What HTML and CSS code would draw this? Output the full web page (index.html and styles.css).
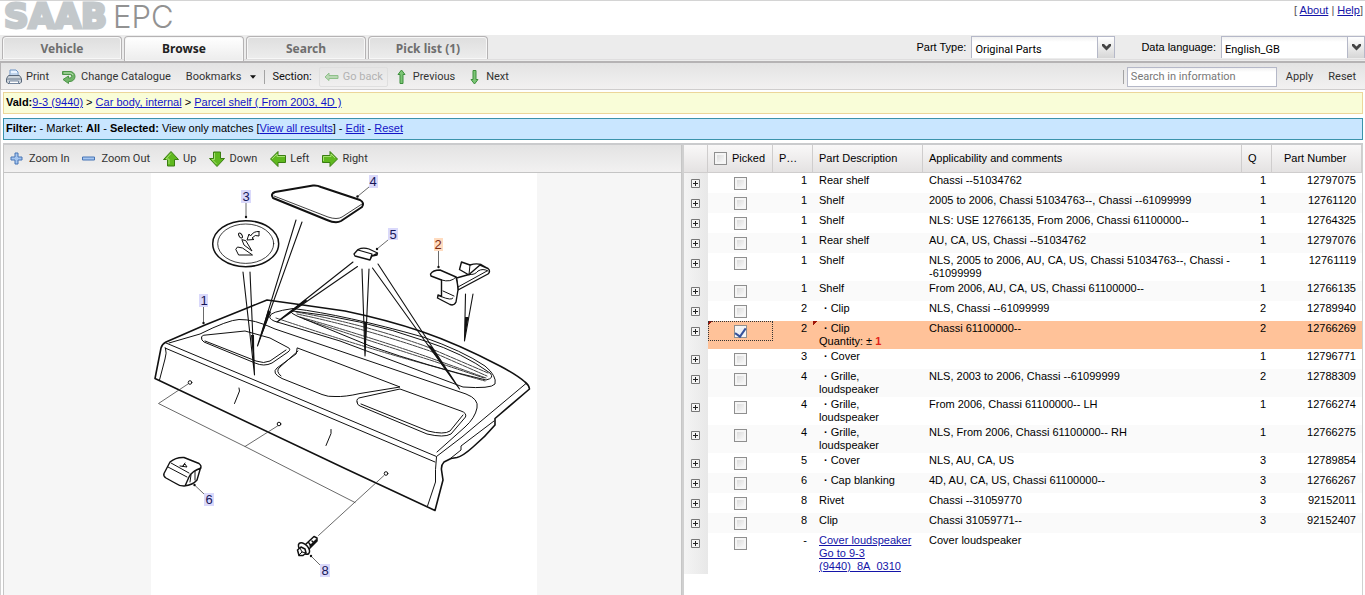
FILE: index.html
```html
<!DOCTYPE html>
<html lang="en">
<head>
<meta charset="utf-8">
<title>Saab EPC</title>
<link rel="stylesheet" href="styles.css">
</head>
<body>
<div class="page">
<header class="header">
  <div class="logo"><span class="logo-saab">SAAB</span><span class="logo-epc">EPC</span></div>
  <div class="header-links">[ <a href="#">About</a> | <a href="#">Help</a>]</div>
</header>

<div class="tabstrip">
  <nav class="tabs">
    <button class="tab">Vehicle</button>
    <button class="tab active">Browse</button>
    <button class="tab">Search</button>
    <button class="tab">Pick list (1)</button>
  </nav>
  <div class="selectors">
    <label for="ptype">Part Type:</label>
    <div class="combo"><select id="ptype"><option>Original Parts</option></select><span class="trigger"><svg width="9" height="7" viewBox="0 0 9 7"><path d="M0 0h2l2.500 2.500L7 0h2v2L4.500 6.500 0 2z" fill="#444"/></svg></span></div>
    <label class="lang" for="dlang">Data language:</label>
    <div class="combo"><select id="dlang"><option>English_GB</option></select><span class="trigger"><svg width="9" height="7" viewBox="0 0 9 7"><path d="M0 0h2l2.500 2.500L7 0h2v2L4.500 6.500 0 2z" fill="#444"/></svg></span></div>
  </div>
</div>

<div class="toolbar main-toolbar">
  <button class="tool"><svg width="16" height="16" viewBox="0 0 16 16"><path d="M4 7V1h6l2 2v4" fill="#eaf3ff" stroke="#6b93c4"/><path d="M2.500 6.500h11l2 3v3.500l-1.500 1.500H2L.5 13V9.500z" fill="#ccd3da" stroke="#596779"/><path d="M1 10h14" stroke="#69788c"/><path d="M3.500 12h9v2.500h-9z" fill="#fff" stroke="#74869e"/><path d="M5 5h6" stroke="#96b4d8"/></svg>Print</button>
  <button class="tool"><svg width="16" height="16" viewBox="0 0 16 16"><path d="M1.500 2.500H9a5 5 0 0 1 0 10H7.500v2L2 10.500 7.500 7v2H9a1.500 1.500 0 0 0 0-3.500H1.500z" fill="#72b56a" stroke="#4b9547"/><path d="M3 4h6a3.500 3.500 0 0 1 3 2" stroke="#b5deb0" fill="none"/></svg>Change Catalogue</button>
  <button class="tool bookmarks">Bookmarks<svg width="6" height="4" viewBox="0 0 7 4"><path d="M0 0h7L3.500 4z" fill="#111"/></svg></button>
  <span class="sep"></span>
  <span class="section-label">Section:</span>
  <button class="tool disabled" disabled><svg width="15" height="10" viewBox="0 0 15 10"><path d="M5 1L1 5l4 3.500V6.500h9v-3H5z" fill="#b9d8b4" stroke="#8fc08b"/></svg>Go back</button>
  <button class="tool prev"><svg width="9" height="16" viewBox="0 0 9 16"><path d="M4.500 1L8 5.500H6v9H3v-9H1z" fill="#7cc576" stroke="#3d8f3c"/></svg>Previous</button>
  <button class="tool next"><svg width="9" height="16" viewBox="0 0 9 16"><path d="M4.500 15L8 10.500H6v-9H3v9H1z" fill="#7cc576" stroke="#3d8f3c"/></svg>Next</button>
  <div class="search">
    <span class="sep"></span>
    <input type="text" aria-label="Search in information" placeholder="Search in information">
    <button class="tool">Apply</button>
    <button class="tool">Reset</button>
  </div>
</div>

<div class="body">
<div class="crumbs"><b>Vald:</b><a href="#">9-3 (9440)</a> &gt; <a href="#">Car body, internal</a> &gt; <a href="#">Parcel shelf ( From 2003, 4D )</a></div>
<div class="filter"><b>Filter:</b> - Market: <b>All</b> - <b>Selected:</b> View only matches [<a href="#">View all results</a>] - <a href="#">Edit</a> - <a href="#">Reset</a></div>

<main class="split">
<section class="viewer">
  <div class="toolbar zoom-toolbar">
    <button class="tool"><svg width="13" height="13" viewBox="0 0 13 13"><path d="M5 1h3v4h4v3H8v4H5V8H1V5h4z" fill="#a6c6f0" stroke="#4775b5"/></svg>Zoom In</button>
    <button class="tool"><svg width="13" height="13" viewBox="0 0 13 13"><path d="M.5 5h12v3H.5z" fill="#a6c6f0" stroke="#4775b5"/></svg>Zoom Out</button>
    <button class="tool arrow"><svg width="16" height="16" viewBox="0 0 16 16"><path d="M8 .5L15.500 8.500h-4v6.500h-7V8.500h-4z" fill="#5fb81f" stroke="#3a7d12"/><path d="M8 2.500L3 8h3v5" fill="none" stroke="#a5df70"/></svg>Up</button>
    <button class="tool arrow"><svg width="16" height="16" viewBox="0 0 16 16"><path d="M8 15.500L15.500 7.500h-4V1h-7v6.500h-4z" fill="#5fb81f" stroke="#3a7d12"/><path d="M5.500 2v6.500H3L7.500 13" fill="none" stroke="#a5df70"/></svg>Down</button>
    <button class="tool arrow"><svg width="16" height="16" viewBox="0 0 16 16"><path d="M.5 8L8 .5v4h7.500v7H8v4z" fill="#5fb81f" stroke="#3a7d12"/><path d="M2 8l5-5v2.500h8" fill="none" stroke="#a5df70"/></svg>Left</button>
    <button class="tool arrow"><svg width="16" height="16" viewBox="0 0 16 16"><path d="M15.500 8L8 .5v4H.5v7H8v4z" fill="#5fb81f" stroke="#3a7d12"/><path d="M1.500 10V5.500H9V3l4 4" fill="none" stroke="#a5df70"/></svg>Right</button>
  </div>
  <div class="canvas">
    <svg class="drawing" width="386" height="422" viewBox="151 173 386 422" role="img" aria-label="Parcel shelf, exploded view">
      <g fill="none" stroke="#111" stroke-width="1" stroke-linejoin="round" stroke-linecap="round">
        <!-- shelf body -->
        <path stroke-width="1.600" d="M155 378.500L161 348Q162 344 166 342L205 325L246 308.500L267 300L303 305L345 311Q388 320 423 332T500 366Q517 375 525 382Q529 385 529.500 389L495 418.500V425Q485 437 473 447Q463 456 457 457.500L451 458.500L444 462Q441 465 441.500 470L443 480L435 510.500L345 468.500Z"/>
        <path d="M166 343L345 418L436.500 456.500L462 437L526 383.500M165 348L345 424L435 462M165.500 348Q167 353 165 359L159.500 380M436.500 457Q435 470 435.500 482L427.500 506M169 343L200 334Q228 320 239 319.500Q254 319 275 329L340 351L466 394Q479 399 477 408Q475 418 465 427L437 452"/>
        <path d="M270 316Q269 312 293 308.500Q345 315 423 337Q463 351 485 366Q497 376 495 384Q491 389 463 387L340 341L274 321Q268 318 270 316"/>
        <path d="M293 311Q360 318 425 341Q463 353 490 373Q495 378 486 380Q430 367 370 346L297 316Q287 311 293 311"/>
        <path stroke-width=".8" stroke-dasharray="5 1" d="M296 312Q360 323 425 346L488 373M297 314Q360 327 430 351L487 376M300 317Q360 334 425 356L486 378M304 319Q370 341 430 360L484 378M276 318Q350 343 421 363L485 381"/>
        <path d="M201.500 338Q201 335 206 335L245 331L270 338L287 347Q292 349 288 352L272 363Q264 367 255 363L204 342Q201 340 201.500 338M205 341L256 361Q264 364 270 361L286 350"/>
        <path d="M297.500 348L340 364L400 387L360 393.500Q345 397 335 396.500Q328 397 322 394.500L282 378.500Q271 373 277 368L296 354ZM298 351L280 367Q275 371 281 376"/>
        <path d="M357 402Q356 398 361 397.500L400 389L461 411Q467 413 465.500 417L451 434Q444 438 427 434L360 406Q357 405 357 402M361 404L428 431Q444 435 450 431L463 415"/>
        <path d="M451 458L461 450V446L494 421"/>
        <path d="M239 388l.5 3-5 12.500M331 429.500v4l-5 12"/>
        <path stroke="#444" stroke-width=".8" d="M188 384L158.500 403.500L245 446.500L277.500 426M245 446.500L355 502.500M384 475.500L318.500 535.500"/>
        <circle cx="190" cy="382.500" r="1.800"/><circle cx="279" cy="424" r="1.800"/><circle cx="386" cy="473.500" r="1.800"/>
        <!-- placement pointers -->
        <path stroke-width="1.100" d="M243 272L254.500 375L250 272M296 220L257.500 346L302 222M353 262L277 322L357.500 266.500M362 269L365 356L369 269M372.500 268L459.500 389L378 264M465.500 294L464.500 341L473 294"/>
        <path fill="#111" stroke="none" d="M251 335L254.500 375L254 335ZM268 310L257.500 346L271 312ZM306 299L277 322L307 301ZM364 322L365 356L367 322ZM427 344L459.500 389L432 347ZM465 317L464.500 341L468.500 317Z"/>
        <!-- 3: emblem -->
        <ellipse cx="245.700" cy="243.700" rx="33" ry="23" stroke-width="1.500"/><ellipse cx="245.700" cy="243.700" rx="28" ry="19.700" stroke-width=".8"/>
        <path d="M259 231.500v4.500q-4-2-7 2l2 1.500-7 .5 2-6 1.500 2q3-5 8.500-4.500M236 249l1.500-2 5 1 10 7H239zM242 240l2 5 8 6-6-10z"/><ellipse cx="240.500" cy="235.500" rx="1.500" ry="2.800" transform="rotate(-30 240.500 235.500)"/>
        <!-- 4: grille mat -->
        <path stroke-width="2" fill="#fff" d="M273 198Q270 194 275 192L313 185.500Q317 185 321 187L360 200Q365 203 362 207L341 221Q336 224 327 220Z"/><path stroke-width=".8" d="M274 196L328 217Q337 220 342 217L362 204"/>
        <!-- 5: cover -->
        <path stroke-width="1.300" fill="#fff" d="M354 254L358 249.500Q363 247 369 249L377.500 253L377 255L372 256L370 260L355 256ZM358 250L372 254L370 260M372 256L377.500 253"/>
        <!-- 2: clip -->
        <path stroke-width="1.400" fill="#fff" d="M456.500 278L469 274.500L480 265L488 268.500Q491 271 488 274L458 290ZM459.500 269.500L461.500 262L470 265Q476 263 481 264.500L488 268.500M459.500 269.500L469 275"/>
        <path stroke-width="1.400" fill="#fff" d="M430.500 274Q433 270 440 270L456 277Q458 285 458 290L456 302Q454 306 450 304.500L437.500 298L438 295L441.500 296.500V280L431 276Z"/>
        <path d="M441.500 280Q451 283 456 277M443 291L454 296M441 296.500Q452 301 453 298M470 265L469 274.500Q475 275 478 271Q483 268 488 271M458 287L487 271"/>
        <!-- 6: cap -->
        <path stroke-width="1.400" d="M164 473.500L170 462Q176 457 184 457.500L199 463.500Q202 466 200.500 468L197 480Q193 485 184 486Q179 486 175 483L166 478Q163 476 164 473.500M201 468Q192 471 189 477L185 486"/>
        <path d="M171 463L189 473M168 467L187 477M191 475L190 482M195 471V480M180 466l7 1-2-3-3 3 3-4"/>
        <!-- 8: rivet -->
        <path stroke-width="1.500" d="M306 544L314 536.500L317 538V541L309 549M310 546L316 540M309 543l2 3M312 541l2 2"/>
        <ellipse cx="304" cy="548.500" rx="4" ry="7" transform="rotate(-43 304 548.500)" fill="#fff" stroke-width="1.500"/><path stroke-width="1.500" fill="#fff" d="M297.500 550L301 547l4 2 1 4-3 2.500h-4z"/><path d="M300 548l2 4 4 1M302 552l-3 3"/>
        <!-- leaders -->
        <path stroke="#444" stroke-width=".8" d="M246 203V217M203.500 307V323M369 187L357.500 196.500M388 240L377 249M438.500 251V267M204 494L194.500 485M320 565L310.500 555.500"/>
      </g>
      <g fill="#111"><circle cx="246" cy="217" r="1.200"/><circle cx="203.500" cy="323" r="1.200"/><circle cx="357.500" cy="196.500" r="1.200"/><circle cx="377" cy="249" r="1.200"/><circle cx="438.500" cy="267" r="1.200"/><circle cx="194.500" cy="485" r="1.200"/><circle cx="311" cy="556" r="1.200"/></g>
      <g fill="#dad9fb"><path d="M241 190h10v13h-10zM199 294h9v13h-9zM369 175h9v13h-9zM388 228h10v12h-10zM204 493h10v13h-10zM320 564h10v13h-10z"/></g>
      <path fill="#ffdcc0" d="M434 238h9v13h-9z"/>
      <g class="callouts"><text x="246" y="201">3</text><text x="204" y="305">1</text><text x="373" y="186">4</text><text x="393" y="239">5</text><text class="hot" x="438" y="249">2</text><text x="209" y="504">6</text><text x="325" y="575">8</text></g>
    </svg>
  </div>
</section>

<section class="parts">
<table class="grid">
  <colgroup><col class="c-exp"><col class="c-pick"><col class="c-pos"><col class="c-desc"><col><col class="c-q"><col class="c-num"></colgroup>
  <thead><tr><th></th><th class="pick-head"><label><input type="checkbox"> Picked</label></th><th>P…</th><th>Part Description</th><th>Applicability and comments</th><th>Q</th><th class="num-head">Part Number</th></tr></thead>
  <tbody id="rows"></tbody>
</table>
</section>
</main>
</div>
</div>
<script src="parts.js"></script>
</body>
</html>
```
FILE: parts.js
```js
const parts = [
  ['1', 'Rear shelf', 'Chassi --51034762', '1', '12797075'],
  ['1', 'Shelf', '2005 to 2006, Chassi 51034763--, Chassi --61099999', '1', '12761120'],
  ['1', 'Shelf', 'NLS: USE 12766135, From 2006, Chassi 61100000--', '1', '12764325'],
  ['1', 'Rear shelf', 'AU, CA, US, Chassi --51034762', '1', '12797076'],
  ['1', 'Shelf', 'NLS, 2005 to 2006, AU, CA, US, Chassi 51034763--, Chassi -<br>-61099999', '1', '12761119'],
  ['1', 'Shelf', 'From 2006, AU, CA, US, Chassi 61100000--', '1', '12766135'],
  ['2', '<i>·</i>Clip', 'NLS, Chassi --61099999', '2', '12789940'],
  ['2', '<i>·</i>Clip<br>Quantity: ± <b>1</b>', 'Chassi 61100000--', '2', '12766269', true],
  ['3', '<i>·</i>Cover', '', '1', '12796771'],
  ['4', '<i>·</i>Grille,<br>loudspeaker', 'NLS, 2003 to 2006, Chassi --61099999', '2', '12788309'],
  ['4', '<i>·</i>Grille,<br>loudspeaker', 'From 2006, Chassi 61100000-- LH', '1', '12766274'],
  ['4', '<i>·</i>Grille,<br>loudspeaker', 'NLS, From 2006, Chassi 61100000-- RH', '1', '12766275'],
  ['5', '<i>·</i>Cover', 'NLS, AU, CA, US', '3', '12789854'],
  ['6', '<i>·</i>Cap blanking', '4D, AU, CA, US, Chassi 61100000--', '3', '12766267'],
  ['8', 'Rivet', 'Chassi --31059770', '3', '92152011'],
  ['8', 'Clip', 'Chassi 31059771--', '3', '92152407'],
  ['-', '<a href="#">Cover loudspeaker<br>Go to 9-3<br>(9440)_8A_0310</a>', 'Cover loudspeaker', '', '']
];
const expander = '<button class="expander" aria-label="Expand"><svg width="9" height="9" viewBox="0 0 9 9"><path d="M.5.5h8v8h-8z" fill="#f4f4f4" stroke="#777"/><path d="M2 4.500h5M4.500 2v5" stroke="#222"/></svg></button>';
document.getElementById('rows').innerHTML = parts.map(([pos, desc, app, q, num, sel]) =>
  `<tr class="${sel ? 'selected' : ''}"><td class="exp">${expander}</td>` +
  `<td class="pick"><div class="pick-box"><input type="checkbox" aria-label="Picked" ${sel ? 'checked' : ''}></div></td>` +
  `<td class="right">${pos}</td><td class="desc">${desc}</td><td class="app">${app}</td>` +
  `<td class="right">${q}</td><td class="right">${num}</td></tr>`).join('');
```
FILE: styles.css
```css
* { box-sizing: border-box; }
body { margin: 0; font: 11px/13px "Liberation Sans", Arial, sans-serif; color: #000; background: #fff; }
button, input, select { font: inherit; color: inherit; margin: 0; }
button { border: 0; background: none; padding: 0; }
a { color: #1414a8; }
svg { display: block; flex: none; }

.page { display: flex; flex-direction: column; min-height: 100vh; border-top: 1px solid #d4d4d4; }
.header { display: flex; justify-content: space-between; height: 34px; padding: 0 2px 0 3px; }
.logo { display: flex; align-items: flex-start; gap: 6px; }
.logo-saab { font: bold 34px/31px "DejaVu Sans", sans-serif; color: #c3c8cb; -webkit-text-stroke: 3px #c3c8cb; padding-left: 1px; }
.logo-epc { font: 300 31px/31px Inter, sans-serif; color: #929292; }
.header-links { color: #555; padding-top: 3px; }

.tabstrip { display: flex; justify-content: space-between; height: 28px; background: linear-gradient(#ececec 24px, #d2d0d1 24px, #ececec 25px, #ececec 26px, #b5b3b4 26px); padding-left: 2px; }
.tabs { display: flex; gap: 2px; padding-top: 1px; }
.tab { width: 120px; height: 23px; border: 1px solid #b5b3b4; border-bottom: 0; border-radius: 4px 4px 0 0; background: linear-gradient(#dedede, #ededed); box-shadow: inset 0 0 0 1px #f7f7f7; font: bold 12px/24px "Noto Sans", Tahoma, sans-serif; color: #6e6e6e; }
.tab.active { height: 25px; background: linear-gradient(#fff, #ececec); color: #222; }
.selectors { display: flex; gap: 5px; line-height: 24px; }
.selectors .lang { padding-left: 21px; }
.combo { display: flex; height: 22px; margin-top: 1px; }
.combo select { appearance: none; width: 127px; border: 1px solid #b5b8c8; border-bottom: 0; border-radius: 0; background: linear-gradient(#f1f1f1, #fff 5px); padding: 4px 3px 0; font: 11px/18px Roboto, Tahoma, sans-serif; }
.trigger { display: flex; align-items: center; justify-content: center; width: 17px; padding-bottom: 1px; border: 1px solid #b5b8c8; border-left: 0; border-bottom: 0; background: linear-gradient(#fff, #d6d6d6); }

.toolbar { display: flex; align-items: center; background: linear-gradient(#e3e3e3, #f2f1f1); font: 11px/16px Roboto, Tahoma, sans-serif; color: #333; }
.tool { display: flex; align-items: center; gap: 4px; white-space: nowrap; }
.main-toolbar { height: 27px; padding: 1px 9px 0 5px; border-bottom: 1px solid #cfcdcd; border-left: 1px solid #b5b3b4; gap: 12px; }
.main-toolbar .bookmarks { gap: 9px; margin-left: 3px; }
.sep { width: 1px; height: 14px; background: #a3a3a3; }
.main-toolbar > .sep { margin: 0 -5px 0 -4px; }
.section-label { color: #111; }
.main-toolbar .disabled { color: #b2b2b2; border: 1px solid #dfdfdf; padding: 1px 4px; margin-left: -5px; border-radius: 2px; }
.main-toolbar .prev, .main-toolbar .next { gap: 7px; }
.main-toolbar .prev { margin-left: -3px; }
.main-toolbar .next { margin-left: 3px; }
.search { display: flex; align-items: center; gap: 9px; margin-left: auto; }
.search .sep { margin-right: -6px; }
.search input { width: 150px; height: 20px; border: 1px solid #b5b8c8; border-radius: 0; padding: 0 3px; background: linear-gradient(#f0f0f0, #fff 4px); }
.search input::placeholder { color: #777; opacity: 1; }
.search .tool + .tool { margin-left: 6px; }

.body { flex: 1; display: flex; flex-direction: column; padding: 2px 2px 0; border-left: 1px solid #d0d0d0; }
.crumbs, .filter { height: 22px; padding: 3px 2px; }
.crumbs { border: 1px solid #ecd69a; background: #f9fdd8; margin-bottom: 4px; }
.filter { border: 1px solid #3b93ab; background: #c9e6ff; margin-bottom: 3px; }
.crumbs a, .filter a { color: #1414c8; }

.split { flex: 1; display: grid; grid-template-columns: minmax(0, 680fr) minmax(0, 682fr); border-top: 2px solid #cacbcd; }
.viewer { display: flex; flex-direction: column; border-left: 1px solid #c6c6c6; border-right: 1px solid #c6c6c6; }
.zoom-toolbar { height: 28px; padding: 0 6px; gap: 13px; border-bottom: 1px solid #c4c4c4; }
.zoom-toolbar .tool { gap: 6px; }
.zoom-toolbar .arrow { gap: 4px; }
.canvas { flex: 1; display: flex; justify-content: center; padding-left: 3px; background: #f6f6f6; }
.drawing { background: #fff; }
.callouts { font: 13px "Liberation Sans", Arial, sans-serif; fill: #171758; text-anchor: middle; }
.callouts .hot { fill: #7c2a12; }

.parts { border-left: 2px solid #d0d0d0; border-right: 1px solid #d0d0d0; }
.grid { width: 100%; border-collapse: separate; border-spacing: 0; table-layout: fixed; }
.c-exp { width: 24px; } .c-pick { width: 65px; } .c-pos { width: 40px; } .c-desc { width: 110px; } .c-q { width: 30px; } .c-num { width: 90px; }
.grid th { height: 28px; padding: 0 6px; text-align: left; font-weight: normal; white-space: nowrap; background: linear-gradient(#f9f8f8, #e4e2e2); border-right: 1px solid #cfcdcd; border-bottom: 1px solid #cfcdcd; }
.grid .num-head { padding-left: 12px; }
.grid .pick-head label { display: flex; align-items: center; gap: 5px; }
.grid td { height: 20px; padding: 1px 6px; vertical-align: top; }
.grid tr:nth-child(even) td { background: #fafafa; }
.grid .right { text-align: right; }
.grid td.exp, .grid tr:nth-child(even) td.exp { padding: 6px 8px 0 7px; background: linear-gradient(90deg, #f4f4f4, #e8e8e8); }
.expander { display: block; width: 9px; height: 9px; }
.grid td.pick { padding: 0; }
.pick-box { display: flex; justify-content: center; padding-top: 4px; height: 20px; }
.grid input { appearance: none; display: block; flex: none; width: 13px; height: 13px; border: 1px solid #8f8f8f; border-radius: 0; background: linear-gradient(135deg, #d4d4d4, #fff) padding-box; box-shadow: inset 0 0 0 2px #f5f5f5; }
.grid input:checked { background: #eef0f5; }
.grid input:checked::after { content: ""; display: block; width: 5px; height: 9px; margin: 0 auto; border: solid #35519a; border-width: 0 2px 2px 0; transform: rotate(35deg); }
.desc i { font-style: normal; font-weight: bold; padding: 0 3px 0 5px; }
.desc b { color: #e2231a; }
.grid .selected td:not(.exp) { background: #ffc299; }
.selected .pick-box { border: 1px dotted #333; padding-top: 3px; }
.grid tr.selected td.pick, .grid tr.selected td.desc { background: linear-gradient(135deg, #a01408 3px, #ffc299 3px); }
```
